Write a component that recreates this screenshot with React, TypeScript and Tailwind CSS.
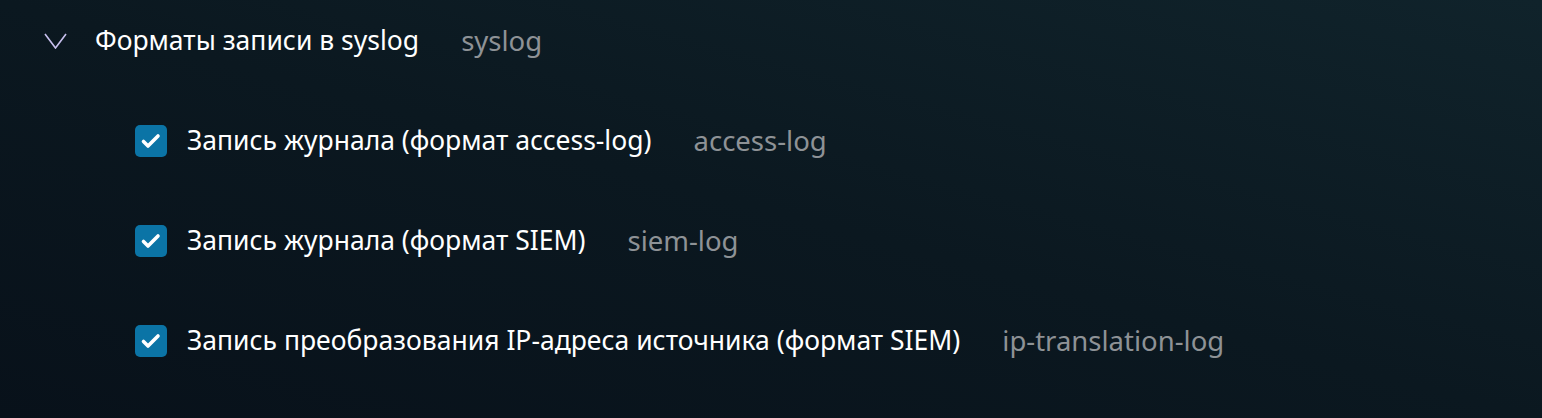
import React from "react";

const font = { fontFamily: '"Noto Sans", "Open Sans", sans-serif' };

const rows = [
  { label: "Запись журнала (формат access-log)", code: "access-log" },
  { label: "Запись журнала (формат SIEM)", code: "siem-log" },
  { label: "Запись преобразования IP-адреса источника (формат SIEM)", code: "ip-translation-log" },
];

const CheckBox: React.FC = () => (
  <div className="w-[32px] h-[32px] rounded-[5px] bg-[#0b74a6] shrink-0">
    <svg width="32" height="32" viewBox="0 0 32 32" fill="none">
      <path d="M8.5 16.5l4.5 4.5 10-10" stroke="white" strokeWidth="3.6" strokeLinecap="round" strokeLinejoin="round" />
    </svg>
  </div>
);

const App: React.FC = () => {
  return (
    <div
      className="w-[1542px] h-[418px] bg-gradient-to-tr from-[#08111a] via-[#0b1820] to-[#10232b] text-[26.5px] overflow-hidden"
      style={font}
    >
      <div className="flex items-center h-[82px] pl-[44px]">
        <svg width="23" height="16" viewBox="0 0 23 16" fill="none" className="shrink-0">
          <path d="M1 1l10.5 14L22 1" stroke="#c8c0ee" strokeWidth="1.6" />
        </svg>
        <span className="ml-[28px] text-white">Форматы записи в syslog</span>
        <span className="ml-[42px] text-[27.5px] text-[#8e9296]">syslog</span>
      </div>
      <div className="flex flex-col pt-[9px]">
        {rows.map((r) => (
          <div key={r.code} className="flex items-center h-[100px] pl-[135px]">
            <CheckBox />
            <span className="ml-[20px] text-white">{r.label}</span>
            <span className="ml-[42px] text-[27.5px] text-[#8e9296]">{r.code}</span>
          </div>
        ))}
      </div>
    </div>
  );
};

export default App;
